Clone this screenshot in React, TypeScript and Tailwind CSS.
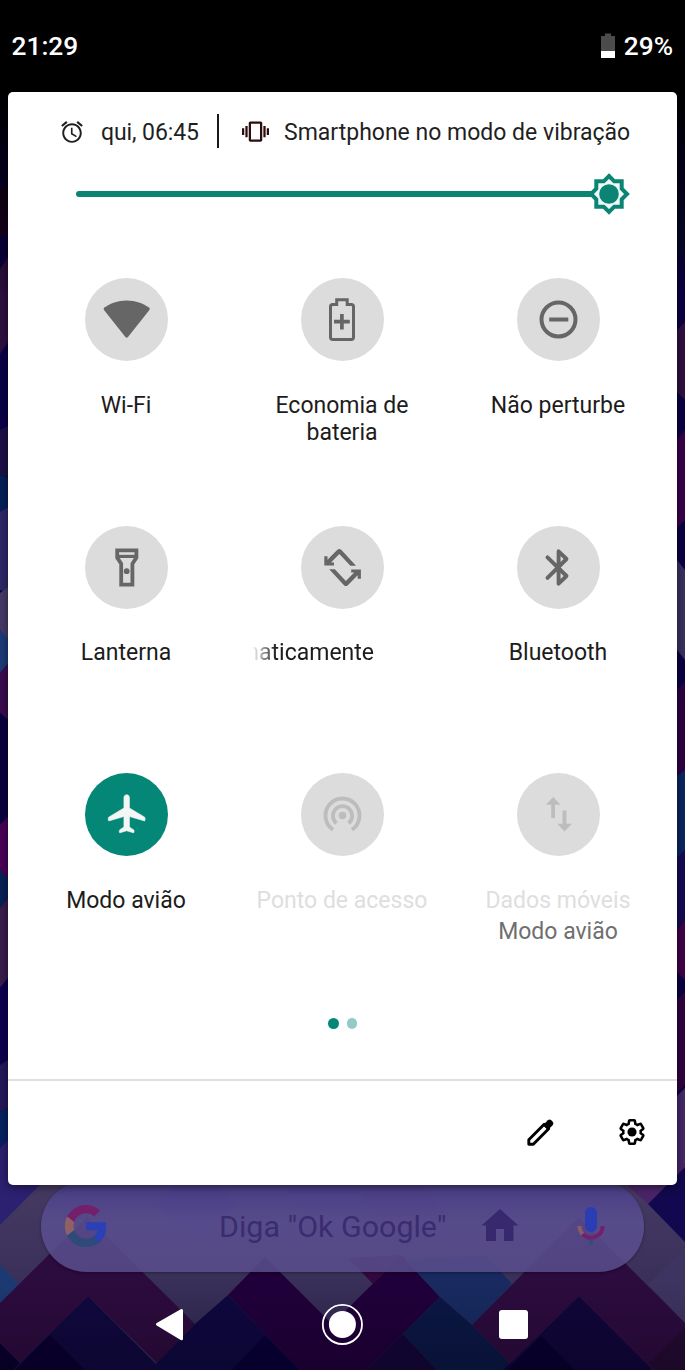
import type { ReactNode } from "react";

const GREY = "#666666";
const FADED = "#bdbdbd";

type Shape = [string, string];

const wallpaper: Shape[] = [
  ["0,191 50,150 50,210 0,236", "#1e0024"],
  ["0,269 20,240 20,330 0,354", "#2e1040"],
  ["0,354 20,325 20,420 0,430", "#0a0048"],
  ["0,430 20,420 20,480 0,475", "#1c1048"],
  ["0,475 20,482 20,500 0,512", "#041f5a"],
  ["0,512 20,500 20,595 0,590", "#2e2868"],
  ["0,593 8,587 8,642 0,630", "#453a68"],
  ["0,630 8,639 8,664 0,673", "#1c3a78"],
  ["0,673 8,664 8,720 0,713", "#3a0c50"],
  ["0,713 8,720 8,817 0,825", "#0c0040"],
  ["0,825 8,817 8,882 0,870", "#480058"],
  ["0,870 8,878 8,898 0,908", "#082058"],
  ["0,908 8,898 8,978 0,988", "#3a1c4c"],
  ["0,988 8,978 8,1060 0,1065", "#0c0050"],
  ["0,1065 8,1060 8,1108 0,1112", "#24185a"],
  ["0,1112 8,1108 8,1140 0,1148", "#062260"],
  ["0,1148 8,1140 100,1140 75,1150 0,1225", "#2c2070"],
  ["677,180 685,190 685,260 677,250", "#0a0838"],
  ["677,330 685,322 685,400 677,392", "#2e1040"],
  ["677,440 685,430 685,520 677,528", "#38004a"],
  ["677,560 685,570 685,660 677,650", "#3a3060"],
  ["677,690 685,682 685,770 677,776", "#2c0044"],
  ["677,776 685,770 685,850 677,858", "#0a2560"],
  ["677,858 685,850 685,920 677,930", "#140a55"],
  ["677,930 685,920 685,980 677,972", "#400048"],
  ["677,1000 685,992 685,1085 677,1092", "#300040"],
  ["677,1096 685,1088 685,1160 677,1170", "#442868"],
  ["197,1164 237,1204 197,1244 157,1204", "#382c6c"],
  ["285,1185 350,1185 372,1204 330,1244", "#40346a"],
  ["360,1185 420,1185 445,1212 405,1252 372,1219", "#462a60"],
  ["0,1265 20,1285 0,1303", "#1c3a72"],
  ["87,1217 195,1324 157,1363 88,1296 20,1363 0,1343 0,1303", "#2c0b3e"],
  ["88,1296 162,1370 13,1370", "#10083e"],
  ["50,1335 85,1370 15,1370", "#0a0030"],
  ["0,1343 20,1363 13,1370 0,1370", "#09002e"],
  ["195,1324 228,1295 300,1370 150,1370", "#0e083f"],
  ["265,1335 300,1370 232,1370", "#080038"],
  ["228,1295 265,1257 332,1324 402,1255 440,1297 367,1370 300,1370", "#20003a"],
  ["348,1258 402,1255 373,1284", "#33083f"],
  ["403,1334 437,1370 367,1370", "#120638"],
  ["405,1260 440,1297 472,1325 512,1284 485,1255", "#182a60"],
  ["440,1297 472,1325 517,1370 437,1370 403,1334", "#0b1745"],
  ["579,1217 685,1323 685,1370 653,1370 579,1296 510,1363 472,1325", "#2c0b3e"],
  ["579,1296 653,1370 503,1370", "#10063a"],
  ["541,1336 575,1370 507,1370", "#080030"],
  ["649,1363 685,1328 685,1370 655,1370", "#230a32"],
  ["610,1170 690,1162 648,1204", "#4a2468"],
  ["648,1204 685,1167 685,1242", "#12084f"],
  ["648,1284 685,1248 685,1323", "#3d3461"],
];

function Wallpaper() {
  return (
    <svg className="absolute inset-0 h-full w-full" viewBox="0 0 685 1370" aria-hidden="true">
      <defs>
        <linearGradient id="slate" x1="0" y1="1180" x2="0" y2="1330" gradientUnits="userSpaceOnUse">
          <stop offset="0" stopColor="#463a62" />
          <stop offset="1" stopColor="#332b55" />
        </linearGradient>
        <linearGradient id="shade" x1="0" y1="1280" x2="0" y2="1370" gradientUnits="userSpaceOnUse">
          <stop offset="0" stopColor="#000" stopOpacity="0" />
          <stop offset="1" stopColor="#000" stopOpacity="0.2" />
        </linearGradient>
        <linearGradient id="top" x1="0" y1="90" x2="0" y2="300" gradientUnits="userSpaceOnUse">
          <stop offset="0" stopColor="#000" />
          <stop offset="1" stopColor="#000" stopOpacity="0" />
        </linearGradient>
      </defs>
      <rect width="685" height="1170" fill="#0b0044" />
      <rect y="1150" width="685" height="220" fill="url(#slate)" />
      {wallpaper.map(([points, fill]) => (
        <polygon key={points} points={points} fill={fill} />
      ))}
      <rect y="90" width="685" height="210" fill="url(#top)" />
      <rect y="1280" width="685" height="90" fill="url(#shade)" />
    </svg>
  );
}

function Icon24({ className, children }: { className: string; children: ReactNode }) {
  return (
    <svg viewBox="0 0 24 24" className={`shrink-0 ${className}`} fill="currentColor">
      {children}
    </svg>
  );
}

const rotateArm = "M23.3 30.2h3.2v3.6L36.4 23.8q1.9-1.8 3.8 0L55 39.7h-5.6L38.3 28 30 36.4h3v3.2H23.3z";

const tiles: { label: string; sub?: string; state?: "on" | "off"; marquee?: boolean; icon: ReactNode }[] = [
  {
    label: "Wi-Fi",
    icon: <path d="M41.7 22.4c9 0 16.6 3 22.4 7.2q1.2 1 .3 2.3L43 59q-1.3 1.4-2.6 0L19 31.900q-.9-1.300.3-2.300C25.100 25.400 32.700 22.400 41.700 22.400z" fill={GREY} />,
  },
  {
    label: "Economia de bateria",
    icon: (
      <g fill="none" stroke={GREY}>
        <path d="M35.700 21.800H46.200V26.400H50.300Q52.500 26.400 52.500 28.600V59.300Q52.500 61.500 50.300 61.500H31.700Q29.500 61.500 29.500 59.300V28.600Q29.500 26.400 31.700 26.400H35.700Z" strokeWidth="3" />
        <path d="M33 43.700H48.800M40.900 36V51.500" strokeWidth="3.700" />
      </g>
    ),
  },
  {
    label: "Não perturbe",
    icon: (
      <g fill="none" stroke={GREY} strokeWidth="4">
        <circle cx="41.500" cy="41.500" r="17" />
        <path d="M32.200 41.500H51.300" />
      </g>
    ),
  },
  {
    label: "Lanterna",
    icon: (
      <g fill="none" stroke={GREY} strokeWidth="3.800">
        <path d="M32.200 24.400H51.400V31.600L47.400 37.800V58.600H36.200V37.800L32.200 31.600Z" />
        <path d="M32 30.400H51.600" strokeWidth="3.200" />
        <circle cx="41.700" cy="45.200" r="2.900" fill={GREY} stroke="none" />
      </g>
    ),
  },
  {
    label: "maticamente",
    marquee: true,
    icon: (
      <g fill={GREY}>
        <path d={rotateArm} />
        <path d={rotateArm} transform="rotate(180 41.600 41.500)" />
      </g>
    ),
  },
  {
    label: "Bluetooth",
    icon: <path d="M30.500 31.300L49.500 50L41.600 57.700V25.300L49.500 33L30.500 51.900" fill="none" stroke={GREY} strokeWidth="3.900" strokeLinecap="round" strokeLinejoin="round" />,
  },
  {
    label: "Modo avião",
    state: "on",
    icon: (
      <path
        transform="translate(19.600 17.900) scale(1.840 1.900)"
        d="M21.700 15.800q.3-.1.300-.5v-.9q0-.5-.4-.7L13.500 9V3.500c0-.83-.67-1.500-1.500-1.500s-1.500.67-1.500 1.500V9L2.400 13.700q-.4.200-.4.700v.9q0 .400.300.500L10.500 13.500V19L8.300 20.400q-.3.200-.3.500v.700q0 .500.500.400L12 21l3.500 1q.5.100.5-.4v-.7q0-.3-.3-.5L13.500 19v-5.500z"
        fill="#f2f7f6"
        stroke="#f2f7f6"
        strokeWidth="0.300"
      />
    ),
  },
  {
    label: "Ponto de acesso",
    state: "off",
    icon: (
      <g fill="none" stroke={FADED} strokeWidth="3.800">
        <path d="M32 56.600A17 17 0 1 1 51 56.600" />
        <path d="M35.500 50.300A9.600 9.600 0 1 1 47.500 50.300" />
        <circle cx="41.500" cy="42.500" r="3.800" fill={FADED} stroke="none" />
      </g>
    ),
  },
  {
    label: "Dados móveis",
    sub: "Modo avião",
    state: "off",
    icon: (
      <g fill={FADED}>
        <path d="M36.200 24L43.500 31.700H38V45H34.200V31.700H28.800Z" />
        <path d="M47.500 58.400L54.800 50.800H49.500V37.400H45.500V50.800H40.200Z" />
      </g>
    ),
  },
];

function StatusBar() {
  return (
    <header className="flex h-[91.5px] shrink-0 items-center justify-between bg-black pl-[11.5px] pr-[12px] pt-[1.5px] text-[26.300px] font-medium text-white">
      <span>21:29</span>
      <span className="flex items-center gap-[8.500px]">
        <svg className="-mt-[2px] h-[26px] w-[14px]" viewBox="0 0 14 26">
          <path d="M4 0.500H10V3H14V25H0V3H4Z" fill="#4b4b4b" />
          <path d="M0 18H14V25H0Z" fill="#fff" />
        </svg>
        <span>29%</span>
      </span>
    </header>
  );
}

function Slider() {
  return (
    <div className="flex h-[44px] items-center pl-[68px]">
      <div className="h-[6px] w-[515px] rounded-l-full bg-[#0c8474]" />
      <svg viewBox="0 0 42 42" className="-ml-[3px] h-[42px] w-[42px]">
        <path
          d="M21 3L26.300 8.300H33.700V15.700L39 21L33.700 26.300V33.700H26.300L21 39L15.700 33.700H8.300V26.300L3 21L8.300 15.700V8.300H15.700Z"
          fill="#eefaf8"
          stroke="#0c8474"
          strokeWidth="4"
        />
        <circle cx="21" cy="21" r="9.800" fill="#0c8474" />
      </svg>
    </div>
  );
}

function Panel() {
  return (
    <section className="mx-[8px] flex h-[1093.5px] shrink-0 flex-col rounded-[5px] bg-white shadow-[0_2px_8px_rgba(0,0,0,0.5)]">
      <div className="flex h-[80.500px] items-center pl-[51px] text-[23px] text-[#1f1f1f]">
        <Icon24 className="h-[26px] w-[26px]">
          <path d="M22 5.720l-4.600-3.860-1.290 1.530 4.600 3.860L22 5.720zM7.880 3.390L6.600 1.860 2 5.710l1.290 1.530 4.590-3.850zM12.500 8H11v6l4.750 2.850.75-1.230-4-2.370V8zM12 4c-4.970 0-9 4.030-9 9s4.020 9 9 9c4.970 0 9-4.030 9-9s-4.030-9-9-9zm0 16.200c-3.980 0-7.200-3.220-7.200-7.200S8.020 5.800 12 5.800s7.200 3.220 7.200 7.200-3.220 7.200-7.200 7.200z" />
        </Icon24>
        <span className="ml-[16px] w-[98px] translate-y-[1px] whitespace-nowrap tracking-[-0.1px]">qui, 06:45</span>
        <span className="ml-[18px] h-[34px] w-[2px] -translate-y-[1px] bg-[#1a1a1a]" />
        <Icon24 className="ml-[23px] h-[27px] w-[27px]">
          <path fill="#2b0f10" d="M0 15h2V9H0v6zm3 2h2V7H3v10zm19-8v6h2V9h-2zm-3 8h2V7h-2v10zM16.500 3h-9C6.670 3 6 3.670 6 4.500v15c0 .83.67 1.500 1.500 1.500h9c.83 0 1.500-.67 1.500-1.500v-15c0-.83-.67-1.500-1.500-1.500zM16 19H8V5h8v14z" />
        </Icon24>
        <span className="ml-[15px] translate-y-[1px] whitespace-nowrap">Smartphone no modo de vibração</span>
      </div>
      <Slider />
      <div className="mt-[62px] grid grid-cols-[216px_216px_216px] auto-rows-[247.500px] pl-[10px]">
        {tiles.map((t) => (
          <div key={t.label} className="flex flex-col items-center text-center text-[23px] leading-[27px]">
            <div
              className={`h-[83px] w-[83px] shrink-0 rounded-full ${t.state === "on" ? "bg-[#058777]" : "bg-[#dcdcdc]"}`}
            >
              <svg viewBox="0 0 83 83" className="h-[83px] w-[83px]">
                {t.icon}
              </svg>
            </div>
            {t.marquee ? (
              <div className="mt-[30.5px] flex w-[122px] -translate-x-[29px] justify-end overflow-hidden whitespace-nowrap text-[#1c1c1c] [mask-image:linear-gradient(to_right,transparent_0px,black_24px)]">
                {t.label}
              </div>
            ) : (
              <div
                className={`mt-[30.500px] w-[180px] ${t.state === "off" ? "text-[#dedede]" : "text-[#1c1c1c]"}`}
              >
                {t.label}
              </div>
            )}
            {t.sub && <div className="mt-[4px] text-[#6f6f6f]">{t.sub}</div>}
          </div>
        ))}
      </div>
      <div className="-mt-[2.5px] flex justify-center gap-[8px]">
        <span className="h-[10.500px] w-[10.500px] rounded-full bg-[#058777]" />
        <span className="h-[10.500px] w-[10.500px] rounded-full bg-[#92cbc5]" />
      </div>
      <footer className="mt-auto flex h-[106.500px] items-center justify-end gap-[64px] border-t-2 border-[#e0e0e0] pb-[1px] pr-[31.500px] text-black">
        <svg viewBox="0 0 27 27" className="h-[27px] w-[27px]">
          <path d="M1.800 20.700L17.200 5.300L21.700 9.800L6.300 25.200H1.800Z" fill="none" stroke="#000" strokeWidth="2.900" strokeLinejoin="round" />
          <path d="M16 6.200L20.800 1.300Q22.500 -.1 24.200 1.300L25.700 2.800Q27 4.500 25.700 6.200L20.800 11Z" fill="#000" />
        </svg>
        <svg viewBox="0 0 24 24" className="h-[28px] w-[28px]">
          <path
            d="M19.430 12.980c.04-.32.07-.64.07-.98s-.03-.66-.07-.98l2.110-1.650c.19-.15.24-.42.12-.64l-2-3.460c-.09-.16-.26-.25-.44-.25-.06 0-.12.01-.17.03l-2.490 1c-.52-.4-1.080-.73-1.690-.98l-.38-2.650C14.460 2.180 14.250 2 14 2h-4c-.25 0-.46.18-.49.42l-.38 2.650c-.61.25-1.170.59-1.690.98l-2.490-1c-.06-.02-.12-.03-.18-.03-.17 0-.34.09-.43.25l-2 3.460c-.13.22-.07.49.12.64l2.110 1.650c-.04.32-.07.65-.07.98s.03.66.07.98l-2.110 1.650c-.19.15-.24.42-.12.64l2 3.460c.09.16.26.25.44.25.06 0 .12-.01.17-.03l2.490-1c.52.4 1.080.73 1.690.98l.38 2.650c.03.24.24.42.49.42h4c.25 0 .46-.18.49-.42l.38-2.650c.61-.25 1.170-.59 1.690-.98l2.490 1c.06.02.12.03.18.03.17 0 .34-.09.43-.25l2-3.460c.12-.22.07-.49-.12-.64l-2.110-1.650z"
            fill="none"
            stroke="#000"
            strokeWidth="2.200"
          />
          <circle cx="12" cy="12" r="3.900" />
        </svg>
      </footer>
    </section>
  );
}

function SearchBar() {
  return (
    <div className="mx-[41px] -mt-[4.5px] flex h-[91px] shrink-0 items-center rounded-full bg-[linear-gradient(rgba(72,60,138,0.87),rgba(90,79,144,0.87)_45%,rgba(88,77,138,0.87))] pl-[22px] shadow-[0_1px_3px_rgba(0,0,0,0.35)]">
      <svg viewBox="0 0 24 24" className="h-[46px] w-[46px]">
        <path fill="#2a40b4" d="M22.560 12.250c0-.78-.07-1.530-.2-2.250H12v4.260h5.920c-.26 1.370-1.040 2.530-2.210 3.310v2.770h3.570c2.080-1.920 3.280-4.740 3.280-8.090z" />
        <path fill="#2e4a78" d="M12 23c2.970 0 5.460-.98 7.280-2.660l-3.570-2.770c-.98.66-2.230 1.060-3.710 1.060-2.860 0-5.290-1.930-6.160-4.530H2.180v2.840C3.990 20.530 7.700 23 12 23z" />
        <path fill="#8f6064" d="M5.840 14.090c-.22-.66-.35-1.360-.35-2.090s.13-1.430.35-2.090V7.070H2.180C1.430 8.550 1 10.220 1 12s.43 3.450 1.180 4.930l2.850-2.220.81-.62z" />
        <path fill="#741f6c" d="M12 5.380c1.620 0 3.060.56 4.210 1.640l3.150-3.150C17.450 2.090 14.970 1 12 1 7.700 1 3.990 3.470 2.180 7.070l3.660 2.840c.87-2.600 3.300-4.530 6.160-4.530z" />
      </svg>
      <span className="mt-[1px] ml-[110px] w-[228px] whitespace-nowrap text-[30.400px] text-[#3a2c70]">Diga "Ok Google"</span>
      <svg viewBox="0 0 38 34" className="-mt-[2px] ml-[34px] h-[34px] w-[38px]">
        <path d="M19 1L37.500 17.500H32.500V33H23V21H15V33H5V17.500H.5Z" fill="#38296e" />
      </svg>
      <svg viewBox="0 0 28 40" className="-mt-[1px] ml-[58px] h-[40px] w-[28px]">
        <rect x="8" y="1" width="12" height="25" rx="6" fill="#2a3db4" />
        <path d="M2.400 20A11.600 11.600 0 0 0 5.800 28.200" fill="none" stroke="#8d5a68" strokeWidth="4" />
        <path d="M5.800 28.200A11.600 11.600 0 0 0 25.600 20" fill="none" stroke="#741f6c" strokeWidth="4" />
        <path d="M14 33.500V39" stroke="#364c78" strokeWidth="4" />
      </svg>
    </div>
  );
}

function NavBar() {
  return (
    <nav className="flex flex-1 items-start pl-[155px] pt-[31px]">
      <svg viewBox="0 0 28 42" className="h-[42px] w-[28px]">
        <path d="M2.500 21.300L26.500 7.500V35.700Z" fill="#fff" stroke="#fff" strokeWidth="3" strokeLinejoin="round" />
      </svg>
      <svg viewBox="0 0 42 42" className="ml-[138px] h-[42px] w-[42px]">
        <circle cx="21.400" cy="21.400" r="19.600" fill="none" stroke="#fff" strokeWidth="1.800" />
        <circle cx="21.400" cy="21.400" r="13.500" fill="#fff" />
      </svg>
      <span className="ml-[136px] mt-[7px] h-[29px] w-[29px] rounded-[3px] bg-white" />
    </nav>
  );
}

export default function App() {
  return (
    <main className="relative h-[1370px] w-[685px] overflow-hidden font-['Roboto',sans-serif]">
      <Wallpaper />
      <div className="relative flex h-full flex-col">
        <StatusBar />
        <div className="relative z-10">
          <Panel />
        </div>
        <SearchBar />
        <NavBar />
      </div>
    </main>
  );
}
